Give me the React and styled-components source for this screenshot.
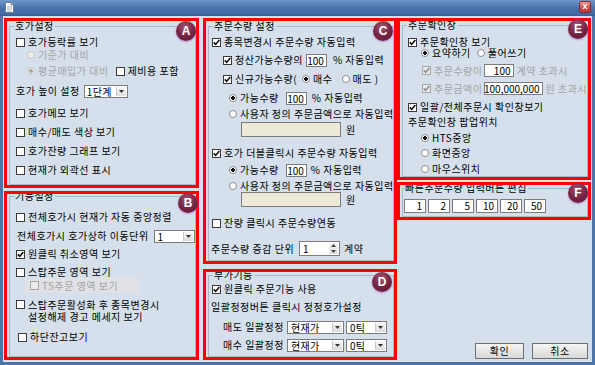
import React from 'react'
import styled, { createGlobalStyle } from 'styled-components'

const FONT = '"Noto Sans CJK KR", "Noto Sans", sans-serif'
const BG = '#d5e0ec'
const MUTED = '#a4a4a4'

const GlobalStyle = createGlobalStyle`
  html, body {
    margin: 0;
    padding: 0;
    background: #4b74aa;
  }
  body {
    font-family: ${FONT};
    font-size: 10px;
    letter-spacing: 0.5px;
    color: #000;
  }
  * {
    box-sizing: border-box;
  }
`

const CheckMark = ({ color }) => (
  <svg width='7' height='7' viewBox='0 0 7 7'>
    <path d='M0.8 3.4 L2.7 5.4 L6.3 1' fill='none' stroke={color} strokeWidth='1.6' />
  </svg>
)

const Check = ({ checked, disabled, children, ml, multi }) => (
  <OptionLabel $disabled={disabled} $ml={ml} $multi={multi}>
    <CheckBox $disabled={disabled}>{checked && <CheckMark color={disabled ? '#8e8e8e' : '#111'} />}</CheckBox>
    <span>{children}</span>
  </OptionLabel>
)

const Radio = ({ checked, disabled, children, ml }) => (
  <OptionLabel $disabled={disabled} $ml={ml}>
    <RadioDot $checked={checked} $disabled={disabled} />
    <span>{children}</span>
  </OptionLabel>
)

const Combo = ({ w, ml, align, children }) => (
  <Field $w={w} $ml={ml} $align={align} $arrow>
    <FieldText>{children}</FieldText>
    <DropButton>
      <svg width='5' height='3' viewBox='0 0 5 3'>
        <path d='M0 0 H5 L2.5 3 Z' fill='#333' />
      </svg>
    </DropButton>
  </Field>
)

const App = () => {
  return (
    <>
      <GlobalStyle />
      <Window>
        <TitleBar>
          <svg width='9' height='11' viewBox='0 0 9 11'>
            <path d='M0.5 0.5 H6 L8.5 3 V10.5 H0.5 Z' fill='#fff' stroke='#6b7f99' />
            <path d='M6 0.5 V3 H8.5' fill='#dde5ef' stroke='#6b7f99' />
            <path d='M2 5 H7 M2 7 H7 M2 9 H6' stroke='#8a9ab0' strokeWidth='0.8' />
          </svg>
          <CloseButton>x</CloseButton>
        </TitleBar>

        <Body>
          <Column $w={195} $gap={3} $mr={4}>
            <Section $h={170}>
              <Badge $top={3} $right={3}>A</Badge>
              <Group>
                <Legend>호가설정</Legend>
                <Row $mt={4} $x={6}>
                  <Check>호가등락률 보기</Check>
                </Row>
                <Row $mt={1} $x={17}>
                  <Radio disabled>기준가 대비</Radio>
                </Row>
                <Row $mt={4} $x={17}>
                  <Radio disabled checked>
                    평균매입가 대비
                  </Radio>
                  <Check ml={7}>제비용 포함</Check>
                </Row>
                <Row $mt={8} $x={6}>
                  <Text>호가 높이 설정</Text>
                  <Combo w={44} ml={4}>
                    1단계
                  </Combo>
                </Row>
                <Row $mt={10} $x={6}>
                  <Check>호가메모 보기</Check>
                </Row>
                <Row $mt={7} $x={6}>
                  <Check>매수/매도 색상 보기</Check>
                </Row>
                <Row $mt={7} $x={6}>
                  <Check>호가잔량 그래프 보기</Check>
                </Row>
                <Row $mt={7} $x={6}>
                  <Check>현재가 외곽선 표시</Check>
                </Row>
              </Group>
            </Section>

            <Section>
              <Badge $top={2} $right={1}>B</Badge>
              <Group $mt={-4}>
                <Legend>기능설정</Legend>
                <Row $mt={9} $x={6}>
                  <Check>전체호가시 현재가 자동 중앙정렬</Check>
                </Row>
                <Row $mt={7} $x={7}>
                  <Text>전체호가시 호가상하 이동단위</Text>
                  <Combo w={41} ml={5}>
                    1
                  </Combo>
                </Row>
                <Row $mt={6} $x={6}>
                  <Check checked>원클릭 취소영역 보기</Check>
                </Row>
                <Row $mt={6} $x={6}>
                  <Check>스탑주문 영역 보기</Check>
                </Row>
                <Row $h={15} $x={15}>
                  <Shade>
                    <Check disabled>TS주문 영역 보기</Check>
                  </Shade>
                </Row>
                <Row $mt={6} $x={6} $h={23} $top>
                  <Check multi>
                    스탑주문활성화 후 종목변경시
                    <br />
                    설정해제 경고 메세지 보기
                  </Check>
                </Row>
                <Row $mt={9} $x={8}>
                  <Check>하단잔고보기</Check>
                </Row>
              </Group>
            </Section>
          </Column>

          <Column $w={194} $gap={5}>
            <Section $h={246}>
              <Badge $top={3} $right={4}>C</Badge>
              <Group>
                <Legend>주문수량 설정</Legend>
                <Row $mt={4} $x={3}>
                  <Check checked>종목변경시 주문수량 자동입력</Check>
                </Row>
                <Row $mt={6} $x={14}>
                  <Check checked>청산가능수량의</Check>
                  <Field $w={21} $ml={3}>
                    100
                  </Field>
                  <Text $ml={6}>% 자동입력</Text>
                </Row>
                <Row $mt={7} $x={14}>
                  <Check checked>신규가능수량(</Check>
                  <Radio checked ml={5}>
                    매수
                  </Radio>
                  <Radio ml={9}>매도 )</Radio>
                </Row>
                <Row $mt={7} $x={20}>
                  <Radio checked>가능수량</Radio>
                  <Field $w={21} $ml={7}>
                    100
                  </Field>
                  <Text $ml={5}>% 자동입력</Text>
                </Row>
                <Row $mt={4} $x={20}>
                  <Radio>사용자 정의 주문금액으로 자동입력</Radio>
                </Row>
                <Row $mt={2} $h={15} $x={32}>
                  <Field $w={100} $h={15} $bg='#ece9d8' />
                  <Text $ml={5}>원</Text>
                </Row>
                <Row $mt={10} $x={3}>
                  <Check checked>호가 더블클릭시 주문수량 자동입력</Check>
                </Row>
                <Row $mt={5} $x={20}>
                  <Radio checked>가능수량</Radio>
                  <Field $w={21} $ml={7}>
                    100
                  </Field>
                  <Text $ml={4}>% 자동입력</Text>
                </Row>
                <Row $mt={4} $x={20}>
                  <Radio>사용자 정의 주문금액으로 자동입력</Radio>
                </Row>
                <Row $h={15} $x={32}>
                  <Field $w={100} $h={15} $bg='#ece9d8' />
                  <Text $ml={5}>원</Text>
                </Row>
                <Row $mt={10} $x={3}>
                  <Check>잔량 클릭시 주문수량연동</Check>
                </Row>
                <Row $mt={12} $h={15} $x={2}>
                  <Text>주문수량 증감 단위</Text>
                  <Field $w={41} $h={15} $ml={5} $arrow>
                    <FieldText>1</FieldText>
                    <SpinButtons>
                      <svg width='5' height='3' viewBox='0 0 5 3'>
                        <path d='M0 3 H5 L2.5 0 Z' fill='#444' />
                      </svg>
                      <svg width='5' height='3' viewBox='0 0 5 3'>
                        <path d='M0 0 H5 L2.5 3 Z' fill='#444' />
                      </svg>
                    </SpinButtons>
                  </Field>
                  <Text $ml={4}>계약</Text>
                </Row>
              </Group>
            </Section>

            <Section>
              <Badge $top={3} $right={5}>D</Badge>
              <Group $mt={-3}>
                <Legend>부가기능</Legend>
                <Row $mt={2} $x={3}>
                  <Check checked>원클릭 주문기능 사용</Check>
                </Row>
                <Row $mt={6} $x={2}>
                  <Text>일괄정정버튼 클릭시 정정호가설정</Text>
                </Row>
                <Row $mt={7} $h={14} $x={14}>
                  <Text $w={64}>매도 일괄정정</Text>
                  <Combo w={57}>현재가</Combo>
                  <Combo w={41} ml={2} align='flex-end'>
                    0틱
                  </Combo>
                </Row>
                <Row $mt={4} $h={14} $x={14}>
                  <Text $w={64}>매수 일괄정정</Text>
                  <Combo w={57}>현재가</Combo>
                  <Combo w={41} ml={2} align='flex-end'>
                    0틱
                  </Combo>
                </Row>
              </Group>
            </Section>
          </Column>

          <Column $w={194} $gap={2}>
            <Section $h={162}>
              <Badge $top={1} $right={3}>E</Badge>
              <Group $mt={-2}>
                <Legend>주문확인창</Legend>
                <Row $mt={5} $x={5}>
                  <Check checked>주문확인창 보기</Check>
                </Row>
                <Row $mt={-1} $x={18}>
                  <Radio checked>요약하기</Radio>
                  <Radio ml={6}>풀어쓰기</Radio>
                </Row>
                <Row $mt={5} $h={13} $x={19}>
                  <Check checked disabled>
                    주문수량이
                  </Check>
                  <Field $w={30} $ml={1}>
                    100
                  </Field>
                  <Text $ml={3} $muted>
                    계약 초과시
                  </Text>
                </Row>
                <Row $mt={5} $h={13} $x={19}>
                  <Check checked disabled>
                    주문금액이
                  </Check>
                  <Field $w={59} $ml={1}>
                    100,000,000
                  </Field>
                  <Text $ml={3} $muted>
                    원 초과시
                  </Text>
                </Row>
                <Row $mt={6} $x={5}>
                  <Check checked>일괄/전체주문시 확인창보기</Check>
                </Row>
                <Row $mt={3} $x={5}>
                  <Text>주문확인창 팝업위치</Text>
                </Row>
                <Row $mt={4} $x={18}>
                  <Radio checked>HTS중앙</Radio>
                </Row>
                <Row $mt={3} $x={18}>
                  <Radio>화면중앙</Radio>
                </Row>
                <Row $mt={4} $x={18}>
                  <Radio>마우스위치</Radio>
                </Row>
              </Group>
            </Section>

            <Section $h={38}>
              <Badge $top={1} $right={3}>F</Badge>
              <Group $mt={-3}>
                <Legend $ml={1}>빠른주문수량 입력버튼 편집</Legend>
                <Row $mt={5} $h={14} $x={1} $gap={2}>
                  {[1, 2, 5, 10, 20, 50].map((n) => (
                    <Field key={n} $w={22} $h={14} $pr={3}>
                      {n}
                    </Field>
                  ))}
                </Row>
              </Group>
            </Section>

            <Actions>
              <Button $w={49}>확인</Button>
              <Button $w={56}>취소</Button>
            </Actions>
          </Column>
        </Body>
      </Window>
    </>
  )
}

const Window = styled.div`
  width: 595px;
  height: 365px;
  display: flex;
  flex-direction: column;
  background: #4b74aa;
`

const TitleBar = styled.div`
  height: 16px;
  flex: none;
  display: flex;
  align-items: center;
  justify-content: space-between;
  padding: 0 4px 1px 5px;
  background: linear-gradient(#7097c8, #4872ab 55%, #3f69a2);
  border-bottom: 1px solid #3a5f94;
`

const CloseButton = styled.span`
  width: 12px;
  height: 12px;
  border-radius: 2px;
  border: 1px solid #8d2a2a;
  background: linear-gradient(#ec9a9a, #d14e4e 55%, #c03a3a);
  color: #fff;
  font: bold 9px 'Liberation Sans', sans-serif;
  letter-spacing: 0;
  display: flex;
  align-items: center;
  justify-content: center;
  line-height: 1;
  padding-bottom: 1px;
`

const Body = styled.div`
  flex: 1;
  margin: 0 3px 3px;
  padding: 2px 1px;
  background: ${BG};
  display: flex;
`

const Column = styled.div`
  width: ${({ $w }) => $w}px;
  margin-right: ${({ $mr = 0 }) => $mr}px;
  display: flex;
  flex-direction: column;
  gap: ${({ $gap }) => $gap}px;
`

const Section = styled.section`
  position: relative;
  height: ${({ $h }) => ($h ? `${$h}px` : 'auto')};
  flex: ${({ $h }) => ($h ? 'none' : 1)};
  padding: 3px 1px 3px 3px;
  display: flex;
  flex-direction: column;

  &::after {
    content: '';
    position: absolute;
    inset: 0;
    border: 3px solid #ff0000;
    pointer-events: none;
    z-index: 1;
  }
`

const Badge = styled.span`
  position: absolute;
  top: ${({ $top }) => $top}px;
  right: ${({ $right }) => $right}px;
  z-index: 2;
  width: 20px;
  height: 20px;
  border-radius: 50%;
  background: radial-gradient(circle at 45% 30%, #a65474 0%, #7a2846 45%, #5c1531 100%);
  box-shadow: 0 1px 2px rgba(190, 110, 210, 0.8);
  color: #fff;
  font: bold 12px 'Liberation Sans', sans-serif;
  letter-spacing: 0;
  display: flex;
  align-items: center;
  justify-content: center;
`

const Group = styled.fieldset`
  flex: 1;
  min-width: 0;
  margin: ${({ $mt = -1 }) => $mt}px 2px 0 2px;
  padding: 0;
  border: 1px solid #aab7c7;
`

const Legend = styled.legend`
  margin-left: ${({ $ml = 4 }) => $ml}px;
  padding: 0 1px;
  font-size: 10px;
  line-height: 12px;
  height: 12px;
`

const Row = styled.div`
  display: flex;
  align-items: ${({ $top }) => ($top ? 'flex-start' : 'center')};
  height: ${({ $h = 12 }) => $h}px;
  margin-top: ${({ $mt = 0 }) => $mt}px;
  padding-left: ${({ $x = 0 }) => $x}px;
  gap: ${({ $gap = 0 }) => $gap}px;
  white-space: nowrap;
  line-height: 12px;
`

const OptionLabel = styled.span`
  display: inline-flex;
  align-items: ${({ $multi }) => ($multi ? 'flex-start' : 'center')};
  gap: 3px;
  margin-left: ${({ $ml = 0 }) => $ml}px;
  color: ${({ $disabled }) => ($disabled ? MUTED : '#000')};
  line-height: ${({ $multi }) => ($multi ? '11.5px' : '12px')};

  > span:first-child {
    margin-top: ${({ $multi }) => ($multi ? '1px' : '0')};
  }
`

const CheckBox = styled.span`
  flex: none;
  width: 9px;
  height: 9px;
  border: 1px solid ${({ $disabled }) => ($disabled ? '#a8a8a8' : '#3a3a3a')};
  background: ${({ $disabled }) => ($disabled ? '#ececec' : '#fff')};
  display: flex;
  align-items: center;
  justify-content: center;
`

const RadioDot = styled.span`
  flex: none;
  width: 8px;
  height: 8px;
  border-radius: 50%;
  border: 1px solid ${({ $disabled }) => ($disabled ? '#c4c4c4' : '#8c8c8c')};
  background: ${({ $disabled, $checked }) => {
    const dot = $disabled ? '#a8a8a8' : '#111'
    const fill = $disabled ? '#efefef' : '#fff'
    return $checked ? `radial-gradient(circle, ${dot} 0 1.6px, ${fill} 2px)` : fill
  }};
`

const Text = styled.span`
  flex: none;
  width: ${({ $w }) => ($w ? `${$w}px` : 'auto')};
  margin-left: ${({ $ml = 0 }) => $ml}px;
  color: ${({ $muted }) => ($muted ? MUTED : '#000')};
`

const Field = styled.span`
  flex: none;
  display: flex;
  align-items: stretch;
  justify-content: ${({ $align = 'flex-end' }) => $align};
  width: ${({ $w }) => $w}px;
  height: ${({ $h = 13 }) => $h}px;
  margin-left: ${({ $ml = 0 }) => $ml}px;
  padding-right: ${({ $arrow, $pr = 2 }) => ($arrow ? 0 : $pr)}px;
  border: 1px solid #7c7c7c;
  background: ${({ $bg = '#fff' }) => $bg};
  line-height: ${({ $h = 13 }) => $h - 2}px;
  letter-spacing: 0;
  color: #000;
`

const FieldText = styled.span`
  flex: 1;
  padding: 0 3px;
  letter-spacing: 0.3px;
`

const DropButton = styled.span`
  flex: none;
  width: 10px;
  margin: 1px;
  background: linear-gradient(#f6f6f6, #dcdcdc);
  border-left: 1px solid #c8c8c8;
  display: flex;
  align-items: center;
  justify-content: center;
`

const SpinButtons = styled.span`
  flex: none;
  width: 9px;
  margin: 1px;
  background: linear-gradient(#f6f6f6, #dcdcdc);
  display: flex;
  flex-direction: column;
  align-items: center;
  justify-content: space-around;
`

const Shade = styled.span`
  display: flex;
  align-items: center;
  width: 114px;
  height: 15px;
  padding-left: 5px;
  background: #e0e2e5;
`

const Actions = styled.div`
  margin-top: auto;
  margin-bottom: 1px;
  display: flex;
  justify-content: flex-end;
  gap: 8px;
  padding-right: 3px;
`

const Button = styled.button`
  width: ${({ $w }) => $w}px;
  height: 16px;
  padding: 0;
  border: 1px solid #707070;
  background: linear-gradient(#f7f7f7, #e6e6e6 50%, #d8d8d8);
  font-family: ${FONT};
  font-size: 10px;
  letter-spacing: 0.5px;
  line-height: 14px;
  color: #000;
`

export default App
